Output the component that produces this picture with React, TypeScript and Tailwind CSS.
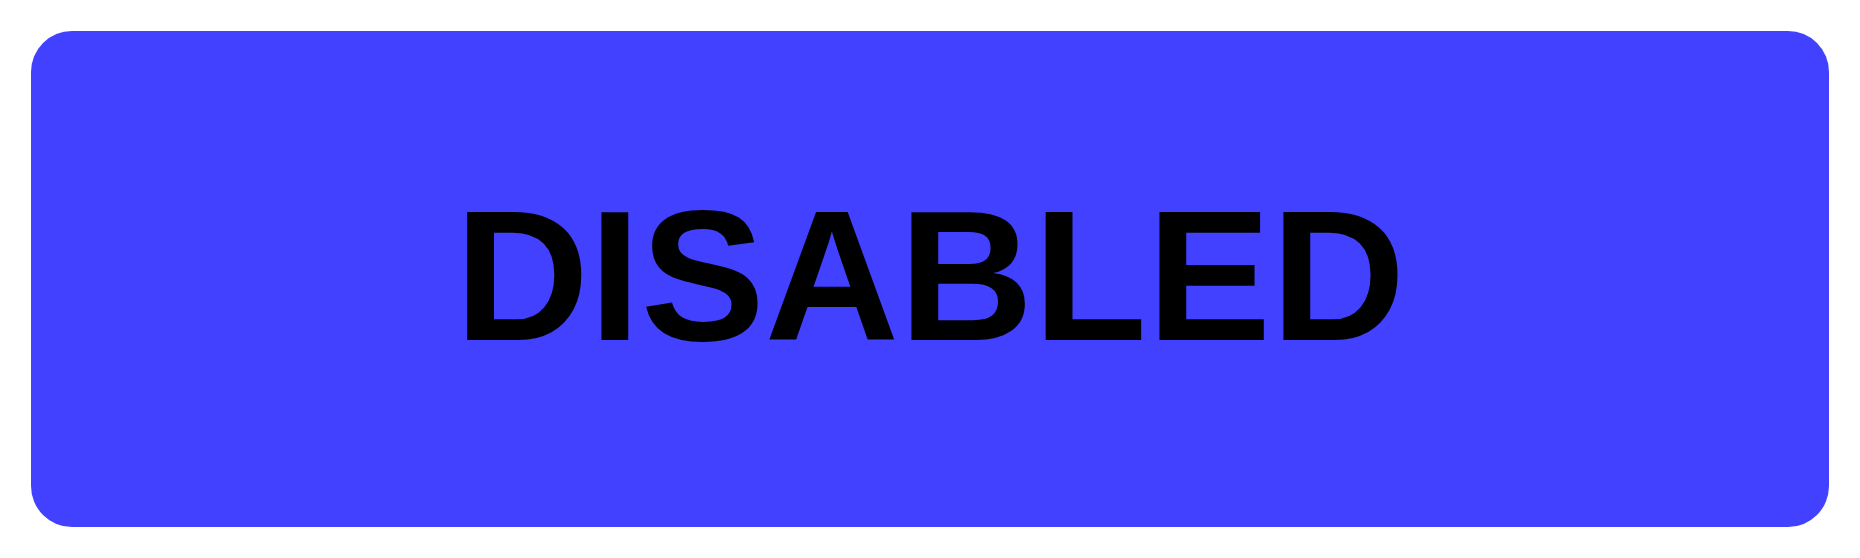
export default function App() {
  return (
    <div className="flex h-[558px] w-full bg-white p-[31px]">
      {/* disabled action button */}
      <button
        type="button"
        disabled
        className="flex flex-1 items-center justify-center rounded-[41px] bg-[#4141ff] pb-[6px]"
      >
        <span className="font-['Liberation_Sans',Arial,sans-serif] text-[186px] font-bold leading-none text-black">
          DISABLED
        </span>
      </button>
    </div>
  )
}
